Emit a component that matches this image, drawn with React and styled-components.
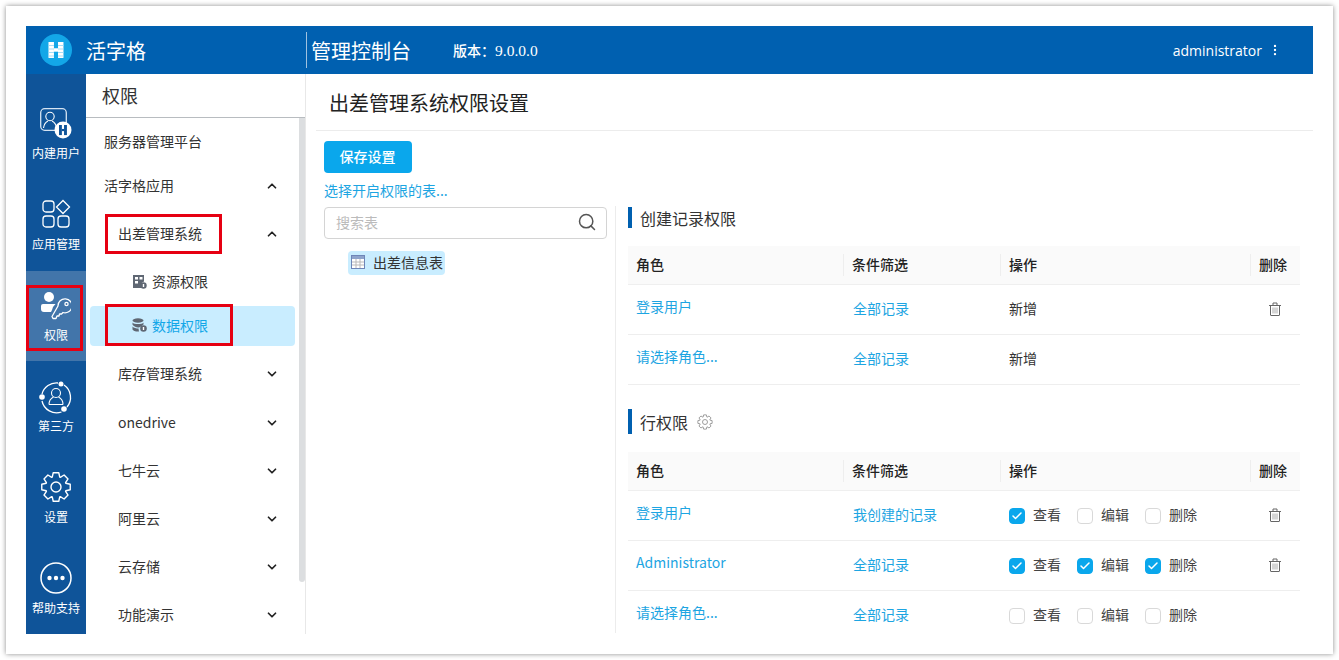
import React from 'react';
import styled, { createGlobalStyle } from 'styled-components';
import { Search, Check, ChevronDown, ChevronUp, EllipsisVertical } from 'lucide-react';

const FONT = '"Noto Sans CJK SC", "Liberation Sans", sans-serif';

const rail = [
	{ label: '内建用户', icon: 'user', height: 91, iconTop: 19, labelTop: 56 },
	{ label: '应用管理', icon: 'apps', height: 91, iconTop: 19, labelTop: 56 },
	{ label: '权限', icon: 'key', height: 90, iconTop: 21, labelTop: 56, active: true },
	{ label: '第三方', icon: 'third', height: 91, iconTop: 20, labelTop: 57 },
	{ label: '设置', icon: 'gear', height: 91, iconTop: 19, labelTop: 57 },
	{ label: '帮助支持', icon: 'more', height: 91, iconTop: 19, labelTop: 57 },
];

const menu = [
	{ label: '服务器管理平台', y: 142, level: 0 },
	{ label: '活字格应用', y: 186, level: 0, arrow: 'up' },
	{ label: '出差管理系统', y: 234, level: 1, arrow: 'up' },
	{ label: '资源权限', y: 282, level: 2, icon: 'file' },
	{ label: '数据权限', y: 326, level: 2, icon: 'db', active: true },
	{ label: '库存管理系统', y: 374, level: 1, arrow: 'down' },
	{ label: 'onedrive', y: 423, level: 1, arrow: 'down' },
	{ label: '七牛云', y: 471, level: 1, arrow: 'down' },
	{ label: '阿里云', y: 519, level: 1, arrow: 'down' },
	{ label: '云存储', y: 567, level: 1, arrow: 'down' },
	{ label: '功能演示', y: 615, level: 1, arrow: 'down' },
];

const createRows = [
	{ role: '登录用户', filter: '全部记录', op: '新增', trash: true },
	{ role: '请选择角色...', filter: '全部记录', op: '新增' },
];

const rowRows = [
	{ role: '登录用户', filter: '我创建的记录', checks: [true, false, false], trash: true },
	{ role: 'Administrator', filter: '全部记录', checks: [true, true, true], trash: true },
	{ role: '请选择角色...', filter: '全部记录', checks: [false, false, false] },
];

// 8 teeth cog outline, centred on 16,16
const gearPath = () => {
	const pts = [];
	for (let i = 0; i < 8; i++) {
		const a = (i * 45 - 90) * (Math.PI / 180);
		[[-21, 10.5], [-11, 14.5], [11, 14.5], [21, 10.5]].forEach(([deg, r]) => {
			const t = a + (deg * Math.PI) / 180;
			pts.push(`${(16 + r * Math.cos(t)).toFixed(2)} ${(16 + r * Math.sin(t)).toFixed(2)}`);
		});
	}
	return 'M' + pts.join('L') + 'Z';
};

const GearIcon = ({ size, color, width }) => (
	<svg width={size} height={size} viewBox="0 0 32 32" fill="none" stroke={color} strokeWidth={width} strokeLinejoin="round">
		<path d={gearPath()} />
		<circle cx="16" cy="16" r="5" />
	</svg>
);

const HMark = ({ color }) => (
	<g fill={color}>
		<rect x="0" y="0" width="4" height="14" />
		<rect x="7" y="0" width="4" height="14" />
		<rect x="4" y="5.500" width="3" height="3" />
	</g>
);

const RailIcon = ({ name }) => {
	const common = { fill: 'none', stroke: '#fff', strokeWidth: 1.3 };
	if (name === 'user') {
		return (
			<svg width="32" height="31" viewBox="0 0 32 31">
				<rect x="0.700" y="0.700" width="25.600" height="21.600" rx="4" stroke="#d6e4f2" strokeWidth="1.300" fill="none" />
				<circle cx="10" cy="8.500" r="4.200" stroke="#fff" strokeWidth="1.100" fill="none" />
				<path d="M3.500 20c.5-3.500 2.500-6 4.500-7M16.500 20c-.5-3.500-2.500-6-4.500-7" stroke="#fff" strokeWidth="1.100" fill="none" />
				<circle cx="23" cy="22" r="8.500" fill="#fff" />
				<g transform="translate(19,17) scale(.72)"><HMark color="#0f5499" /></g>
			</svg>
		);
	}
	if (name === 'apps') {
		return (
			<svg width="30" height="30" viewBox="0 0 30 30">
				<rect x="2" y="2" width="11" height="11" rx="3" {...common} />
				<path d="M22 1.500l6.500 6.500-6.500 6.500-6.500-6.500z" {...common} />
				<rect x="2" y="17" width="11" height="11" rx="3" {...common} />
				<rect x="17" y="17" width="11" height="11" rx="3" {...common} />
			</svg>
		);
	}
	if (name === 'key') {
		return (
			<svg width="30" height="28" viewBox="0 0 30 28">
				<circle cx="8" cy="5" r="5" fill="#fff" />
				<path d="M0 14a2 2 0 0 1 2-2h12.500l-2.500 3-1 3-1 2H3a3 3 0 0 1-3-3z" fill="#fff" />
				<path d="M17 14a7 7 0 1 1 5 6.500l-1.500 1.500h-2l-.5 2h-2l-1 2.500h-3l-1-2z" {...common} strokeLinejoin="round" />
				<circle cx="25.500" cy="12" r="1.600" {...common} />
			</svg>
		);
	}
	if (name === 'third') {
		return (
			<svg width="34" height="34" viewBox="0 0 34 34">
				<path d="M25 4a15 15 0 0 1 3 22M22.500 31a15 15 0 0 1-19.500-11M3 13A15 15 0 0 1 19 2" {...common} />
				<circle cx="22" cy="3" r="2.500" fill="#fff" />
				<circle cx="3" cy="16" r="2.800" fill="#fff" />
				<circle cx="25" cy="28" r="2.800" fill="#fff" />
				<circle cx="17" cy="12" r="4.500" stroke="#fff" strokeWidth="1.100" fill="none" />
				<path d="M10 23.500c0-4 2.500-6.500 4.500-7.500M24 23.500c0-4-2.500-6.500-4.500-7.500M10 23.500h14" stroke="#fff" strokeWidth="1.100" fill="none" />
			</svg>
		);
	}
	if (name === 'gear') {
		return <GearIcon size={32} color="#fff" width={1.4} />;
	}
	return (
		<svg width="32" height="32" viewBox="0 0 32 32">
			<circle cx="16" cy="16" r="15" fill="none" stroke="#fff" strokeWidth="1.500" />
			<circle cx="9.500" cy="16" r="2.200" fill="#fff" />
			<circle cx="16" cy="16" r="2.200" fill="#fff" />
			<circle cx="22.500" cy="16" r="2.200" fill="#fff" />
		</svg>
	);
};

const LogoMark = () => (
	<svg width="32" height="32" viewBox="0 0 32 32">
		<circle cx="16" cy="16" r="16" fill="#13a7e8" />
		<g transform="translate(8.500,8) scale(1.360,1.140)"><HMark color="#fff" /></g>
		<path d="M8 11.500h6M18 11.500h6M8 15h6M18 15h6M8 18.500h6M18 18.500h6M8 22h6M18 22h6" stroke="#8fd6f5" strokeWidth=".8" />
	</svg>
);

const FileLock = () => (
	<svg width="15" height="15" viewBox="0 0 15 15">
		<path d="M1 1h11v6.500a4 4 0 0 0-3 3.500V14H1z" fill="#5f6773" />
		<rect x="3" y="3" width="3" height="2.500" fill="#fff" />
		<rect x="7.500" y="3" width="3" height="2.500" fill="#fff" />
		<rect x="3" y="7" width="3" height="2.500" fill="#fff" />
		<circle cx="11.500" cy="11.500" r="3.200" fill="#5f6773" />
		<rect x="10.800" y="10" width="1.400" height="3" fill="#fff" />
	</svg>
);

const DbLock = () => (
	<svg width="15" height="14" viewBox="0 0 15 14">
		<ellipse cx="6" cy="2.500" rx="5.500" ry="2.200" fill="#5f6773" />
		<path d="M.5 4.500c1 2 10 2 11 0V6.500C10 8 8 9 7 9.500 4 9.500 1 8 .5 6.500z" fill="#5f6773" />
		<path d="M.5 8.500c1 1.500 4 2 6 2l.5 3c-3 .3-6-.8-6.500-2z" fill="#5f6773" />
		<circle cx="11.500" cy="10.500" r="3.300" fill="#5f6773" />
		<rect x="10.800" y="9" width="1.400" height="3" fill="#fff" />
	</svg>
);

const SheetIcon = () => (
	<svg width="14" height="14" viewBox="0 0 14 14">
		<rect x="0.500" y="0.500" width="13" height="13" fill="#fff" stroke="#6e86b8" />
		<rect x="1" y="1" width="12" height="3" fill="#8ea4cc" />
		<path d="M5 4v9M9 4v9M1 7h12M1 10h12" stroke="#b9b9b9" strokeWidth="1" />
	</svg>
);

const TrashIcon = () => (
	<svg width="12" height="14" viewBox="0 0 12 14" fill="none" stroke="#666" strokeWidth="1">
		<path d="M0 3.500h12M4 3.500V1h4v2.500" />
		<path d="M1.500 3.500v9.500a.5.500 0 0 0 .5.500h8a.5.500 0 0 0 .5-.5V3.500" />
		<path d="M4 5.500v6M6 5.500v6M8 5.500v6" stroke="#aaa" />
	</svg>
);

const PermTable = ({ rows }) => (
	<Table>
		<HeadRow>
			<HeadCell $pad={8}>角色</HeadCell>
			<HeadCell $pad={9} $line>条件筛选</HeadCell>
			<HeadCell $pad={9} $line>操作</HeadCell>
			<HeadCell $pad={9} $line>删除</HeadCell>
		</HeadRow>
		{rows.map((row, i) => (
			<BodyRow key={i}>
				<RoleLink>{row.role}</RoleLink>
				<FilterLink>{row.filter}</FilterLink>
				<OpCell>
					{row.op}
					{row.checks && ['查看', '编辑', '删除'].map((label, j) => (
						<CheckItem key={label}>
							<Box $on={row.checks[j]}>
								{row.checks[j] && <Check size={12} color="#fff" strokeWidth={3} />}
							</Box>
							{label}
						</CheckItem>
					))}
				</OpCell>
				<TrashCell>{row.trash && <TrashIcon />}</TrashCell>
			</BodyRow>
		))}
	</Table>
);

const App = () => (
	<>
		<GlobalStyle />
		<Frame>
			<Header>
				<LogoMark />
				<Brand>活字格</Brand>
				<HeaderRule />
				<Console>管理控制台</Console>
				<Version>版本：<span>9.0.0.0</span></Version>
				<UserName>administrator</UserName>
				<EllipsisVertical size={14} color="#fff" />
			</Header>
			<Body>
				<Rail>
					{rail.map(item => (
						<RailItem key={item.label} $h={item.height} $active={item.active}>
							<IconSlot $top={item.iconTop}><RailIcon name={item.icon} /></IconSlot>
							<RailLabel $top={item.labelTop}>{item.label}</RailLabel>
						</RailItem>
					))}
				</Rail>
				<Side>
					<SideTitle>权限</SideTitle>
					{menu.map(item => (
						<MenuItem key={item.label} $y={item.y} $level={item.level} $active={item.active}>
							{item.icon === 'file' && <FileLock />}
							{item.icon === 'db' && <DbLock />}
							{item.label}
							{item.arrow && (
								<Arrow>
									{item.arrow === 'up'
										? <ChevronUp size={14} color="#222" strokeWidth={3} />
										: <ChevronDown size={14} color="#222" strokeWidth={3} />}
								</Arrow>
							)}
						</MenuItem>
					))}
					<ActiveBar />
					<ScrollThumb />
				</Side>
				<Main>
					<PageTitle>出差管理系统权限设置</PageTitle>
					<SaveButton>保存设置</SaveButton>
					<Hint>选择开启权限的表...</Hint>
					<SearchBox>
						搜索表
						<Search size={20} color="#555" strokeWidth={1.8} />
					</SearchBox>
					<TableChip><SheetIcon />出差信息表</TableChip>
					<Divider />
					<SectionOne>
						<SectionTitle $h={21}>创建记录权限</SectionTitle>
						<PermTable rows={createRows} />
					</SectionOne>
					<SectionTwo>
						<SectionTitle $h={25}>
							行权限
							<GearIcon size={16} color="#888" width={1.600} />
						</SectionTitle>
						<PermTable rows={rowRows} />
					</SectionTwo>
				</Main>
			</Body>
		</Frame>
		<RedBox $x={105} $y={214} $w={117} $h={40} />
		<RedBox $x={26} $y={285} $w={57} $h={66} />
		<RedBox $x={105} $y={304} $w={128} $h={42} />
	</>
);

const GlobalStyle = createGlobalStyle`
	html, body {
		margin: 0;
		height: 100%;
		overflow: hidden;
		background: #fff;
		font-family: ${FONT};
		font-size: 14px;
		color: #333;
	}
`;

const Frame = styled.div`
	position: absolute;
	left: 6px;
	top: 6px;
	width: 1327px;
	height: 648px;
	box-sizing: border-box;
	padding: 20px;
	background: #fff;
	box-shadow: 0 0 5px rgba(0, 0, 0, 0.45);
`;

const Header = styled.header`
	display: flex;
	align-items: center;
	height: 48px;
	background: #0060b0;
	color: #fff;
	padding-left: 14px;
	padding-right: 31px;
`;

const Brand = styled.div`
	margin-left: 14px;
	width: 220px;
	font-size: 20px;
`;

const HeaderRule = styled.div`
	width: 1px;
	height: 36px;
	background: #9fc2e0;
`;

const Console = styled.div`
	margin-left: 4px;
	font-size: 20px;
`;

const Version = styled.div`
	margin-left: 42px;
	font-size: 14px;
	font-weight: 500;

	span {
		font-family: "Liberation Serif", serif;
		font-size: 15.500px;
		font-weight: 400;
	}
`;

const UserName = styled.div`
	font-family: "Open Sans", sans-serif;
	font-size: 14px;
	margin-left: auto;
	margin-right: 6px;
`;

const Body = styled.div`
	display: flex;
	height: 560px;
	overflow: hidden;
`;

const Rail = styled.nav`
	width: 60px;
	padding-top: 15px;
	box-sizing: border-box;
	background: #0f5499;
	flex: none;
`;

const RailItem = styled.div`
	position: relative;
	height: ${p => p.$h}px;
	background: ${p => (p.$active ? '#4275aa' : 'transparent')};
`;

const IconSlot = styled.div`
	position: absolute;
	left: 0;
	right: 0;
	top: ${p => p.$top}px;
	display: flex;
	justify-content: center;
`;

const RailLabel = styled.div`
	position: absolute;
	left: 0;
	right: 0;
	top: ${p => p.$top}px;
	text-align: center;
	color: #fff;
	font-size: 12px;
	line-height: 16px;
	white-space: nowrap;
`;

const Side = styled.aside`
	position: relative;
	width: 220px;
	flex: none;
	border-right: 1px solid #e8e8e8;
	box-sizing: border-box;
	overflow: hidden;
`;

const SideTitle = styled.div`
	height: 44px;
	line-height: 43px;
	box-sizing: border-box;
	border-bottom: 1px solid #b8bcc0;
	padding-left: 16px;
	font-size: 18px;
	color: #333;
`;

const MenuItem = styled.div`
	position: absolute;
	z-index: 1;
	left: ${p => (p.$level === 0 ? 18 : p.$level === 1 ? 32 : 46)}px;
	right: 26px;
	top: ${p => p.$y - 74 - 13}px;
	height: 24px;
	display: flex;
	align-items: center;
	gap: 5px;
	font-size: 14px;
	color: ${p => (p.$active ? '#13a7e8' : '#333')};
`;

const Arrow = styled.span`
	display: flex;
	position: absolute;
	right: 0;
	top: 6px;
`;

const ActiveBar = styled.div`
	position: absolute;
	left: 4px;
	top: 232px;
	width: 205px;
	height: 40px;
	border-radius: 4px;
	background: #c9edff;
`;

const ScrollThumb = styled.div`
	position: absolute;
	right: 0;
	top: 44px;
	width: 6px;
	height: 464px;
	border-radius: 0 0 3px 3px;
	background: #dcdee0;
`;

const Main = styled.main`
	position: relative;
	flex: 1;
	overflow: hidden;
`;

const PageTitle = styled.h1`
	margin: 0;
	position: absolute;
	left: 23px;
	top: 14px;
	font-size: 20px;
	line-height: 30px;
	font-weight: 400;
	color: #222;
`;

const SaveButton = styled.button`
	position: absolute;
	left: 18px;
	top: 67px;
	width: 88px;
	height: 32px;
	padding: 0 1px 3px 0;
	border: 0;
	border-radius: 4px;
	background: #0aa7ec;
	color: #fff;
	font: 500 14px ${FONT};
`;

const Hint = styled.div`
	position: absolute;
	left: 18px;
	top: 106px;
	font-size: 14px;
	line-height: 20px;
	color: #1da5e2;
`;

const SearchBox = styled.div`
	position: absolute;
	left: 18px;
	top: 133px;
	width: 283px;
	height: 32px;
	box-sizing: border-box;
	border: 1px solid #d4d4d4;
	border-radius: 4px;
	padding: 0 9px 3px 11px;
	display: flex;
	align-items: center;
	justify-content: space-between;
	font-size: 14px;
	color: #bbb;
`;

const TableChip = styled.div`
	position: absolute;
	left: 42px;
	top: 177px;
	height: 24px;
	box-sizing: border-box;
	padding: 0 1px 2px 3px;
	display: flex;
	align-items: center;
	gap: 8px;
	border-radius: 4px;
	background: #c9edff;
	font-size: 14px;
	color: #333;
	width: 97px;
`;

const Divider = styled.div`
	position: absolute;
	left: 10px;
	right: 0;
	top: 56px;
	height: 1px;
	background: #ececec;

	&::after {
		content: '';
		position: absolute;
		left: 299px;
		top: 76px;
		width: 1px;
		height: 427px;
		background: #ececec;
	}
`;

const Section = styled.section`
	position: absolute;
	left: 322px;
	width: 672px;
`;

const SectionOne = styled(Section)`
	top: 133px;
`;

const SectionTwo = styled(Section)`
	top: 335px;
`;

const SectionTitle = styled.div`
	height: ${p => p.$h}px;
	border-left: 4px solid #0060b0;
	padding-left: 8px;
	display: flex;
	align-items: center;
	gap: 9px;
	font-size: 16px;
	line-height: 20px;
	color: #333;
	margin-bottom: 18px;
`;

const Table = styled.div`
	width: 672px;
`;

const HeadRow = styled.div`
	display: grid;
	grid-template-columns: 215px 157px 250px 50px;
	height: 39px;
	box-sizing: border-box;
	align-items: center;
	background: #fafafa;
	border-bottom: 1px solid #efefef;
`;

const HeadCell = styled.div`
	position: relative;
	padding-left: ${p => p.$pad}px;
	font-size: 14px;
	line-height: 20px;
	margin-top: -3px;
	font-weight: 500;
	color: #222;

	&::before {
		content: '';
		display: ${p => (p.$line ? 'block' : 'none')};
		position: absolute;
		left: 0;
		top: 0;
		height: 22px;
		width: 1px;
		background: #eee;
	}
`;

const BodyRow = styled.div`
	display: grid;
	grid-template-columns: 215px 157px 250px 50px;
	height: 50px;
	box-sizing: border-box;
	align-items: center;
	border-bottom: 1px solid #eee;
`;

const RoleLink = styled.div`
	padding-left: 8px;
	margin-top: -8px;
	font-size: 14px;
	line-height: 20px;
	color: #1da5e2;
`;

const FilterLink = styled.div`
	padding-left: 10px;
	margin-top: -3px;
	font-size: 14px;
	line-height: 20px;
	color: #1da5e2;
`;

const OpCell = styled.div`
	padding-left: 9px;
	margin-top: -3px;
	display: flex;
	font-size: 14px;
	line-height: 20px;
	color: #333;
`;

const CheckItem = styled.label`
	display: flex;
	align-items: center;
	gap: 8px;
	width: 68px;
	font-size: 14px;
	color: #444;
`;

const Box = styled.span`
	width: 16px;
	height: 16px;
	margin-top: 3px;
	box-sizing: border-box;
	border-radius: 4px;
	display: flex;
	align-items: center;
	justify-content: center;
	background: ${p => (p.$on ? '#0aa7ec' : '#fff')};
	border: 1px solid ${p => (p.$on ? '#0aa7ec' : '#d9d9d9')};
`;

const TrashCell = styled.div`
	padding-left: 19px;
	margin-top: -1px;
	display: flex;
`;

const RedBox = styled.div`
	position: absolute;
	z-index: 5;
	left: ${p => p.$x}px;
	top: ${p => p.$y}px;
	width: ${p => p.$w}px;
	height: ${p => p.$h}px;
	box-sizing: border-box;
	border: 3px solid #e60012;
`;

export default App;
